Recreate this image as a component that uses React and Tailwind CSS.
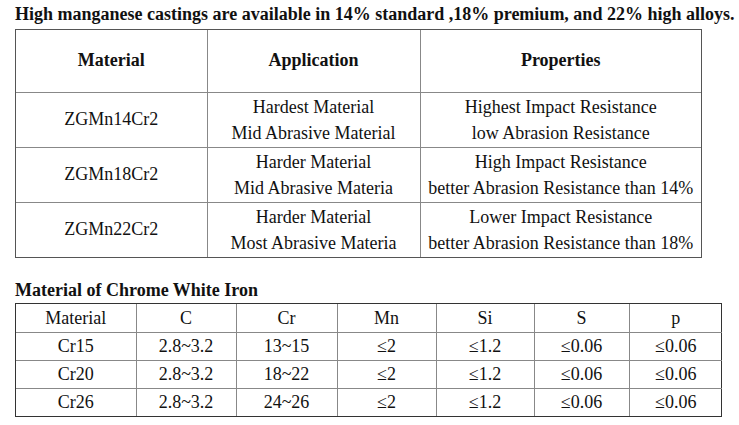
import React from "react";

const mnRows = [
  ["ZGMn14Cr2", ["Hardest Material", "Mid Abrasive Material"], ["Highest Impact Resistance", "low Abrasion Resistance"]],
  ["ZGMn18Cr2", ["Harder Material", "Mid Abrasive Materia"], ["High Impact Resistance", "better Abrasion Resistance than 14%"]],
  ["ZGMn22Cr2", ["Harder Material", "Most Abrasive Materia"], ["Lower Impact Resistance", "better Abrasion Resistance than 18%"]],
];

const crHead = ["Material", "C", "Cr", "Mn", "Si", "S", "p"];
const crRows = [
  ["Cr15", "2.8~3.2", "13~15", "≤2", "≤1.2", "≤0.06", "≤0.06"],
  ["Cr20", "2.8~3.2", "18~22", "≤2", "≤1.2", "≤0.06", "≤0.06"],
  ["Cr26", "2.8~3.2", "24~26", "≤2", "≤1.2", "≤0.06", "≤0.06"],
];

const crWidths = ["w-[120px]", "w-[100px]", "w-[101px]", "w-[99px]", "w-[98px]", "w-[95px]", "w-[93px]"];

export default function App() {
  return (
    <div className="w-[739px] h-[425px] bg-white text-[#111] overflow-hidden font-['Liberation_Serif']">
      <h1 className="pl-[15px] pt-[3px] text-[18px] font-bold leading-[22px] whitespace-nowrap font-['Liberation_Serif']">
        High manganese castings are available in 14% standard ,18% premium, and 22% high alloys.
      </h1>

      {/* manganese table */}
      <div className="ml-[15px] mt-[4px] w-[687px] border border-[#555]">
        <table className="w-full border-collapse table-fixed text-[18px] font-['Liberation_Serif']">
          <colgroup>
            <col className="w-[191px]" />
            <col className="w-[213px]" />
            <col />
          </colgroup>
          <thead>
            <tr className="h-[62px]">
              {["Material", "Application", "Properties"].map((h, i) => (
                <th
                  key={h}
                  className={`font-bold text-center border-b border-[#888] ${i < 2 ? "border-r" : ""}`}
                >
                  {h}
                </th>
              ))}
            </tr>
          </thead>
          <tbody>
            {mnRows.map((r, ri) => (
              <tr key={r[0]} className="h-[55px]">
                <td className={`text-center border-r border-[#888] ${ri < 2 ? "border-b" : ""}`}>{r[0]}</td>
                <td className={`text-center leading-[26px] border-r border-[#888] ${ri < 2 ? "border-b" : ""}`}>
                  {r[1][0]}
                  <br />
                  {r[1][1]}
                </td>
                <td className={`text-center leading-[26px] border-[#888] ${ri < 2 ? "border-b" : ""}`}>
                  {r[2][0]}
                  <br />
                  {r[2][1]}
                </td>
              </tr>
            ))}
          </tbody>
        </table>
      </div>

      <h2 className="pl-[15px] mt-[21px] text-[18px] font-bold leading-[22px] font-['Liberation_Serif']">
        Material of Chrome White Iron
      </h2>

      {/* chrome table */}
      <div className="ml-[15px] mt-[2px] w-[707px] border border-[#333]">
        <table className="w-full border-collapse table-fixed text-[18px] leading-[22px] font-['Liberation_Serif']">
          <colgroup>
            {crWidths.map((w, i) => (
              <col key={i} className={w} />
            ))}
          </colgroup>
          <tbody>
            <tr className="h-[28px]">
              {crHead.map((h, i) => (
                <td key={h} className={`text-center border-b border-[#888] ${i < 6 ? "border-r" : ""}`}>
                  {h}
                </td>
              ))}
            </tr>
            {crRows.map((r, ri) => (
              <tr key={r[0]} className="h-[28px]">
                {r.map((c, i) => (
                  <td
                    key={i}
                    className={`text-center border-[#888] ${i < 6 ? "border-r" : ""} ${ri < 2 ? "border-b" : ""}`}
                  >
                    {c}
                  </td>
                ))}
              </tr>
            ))}
          </tbody>
        </table>
      </div>
    </div>
  );
}
